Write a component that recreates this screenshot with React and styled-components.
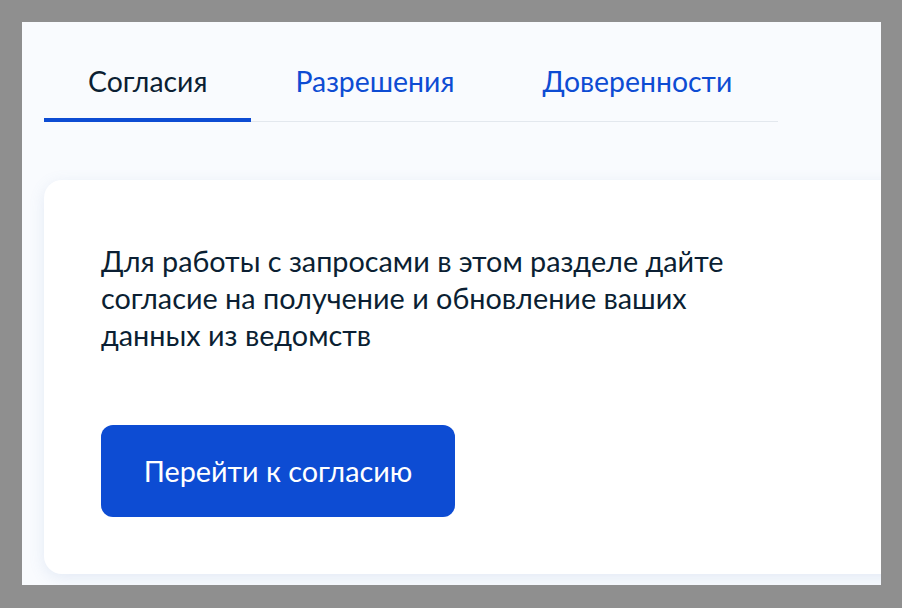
import React from "react";
import styled, { createGlobalStyle } from "styled-components";

const GlobalStyle = createGlobalStyle`
  html, body {
    margin: 0;
    padding: 0;
    background: #8f8f8f;
  }
  * {
    box-sizing: border-box;
  }
`;

const Frame = styled.div`
  width: 902px;
  height: 608px;
  padding: 22px 21px 23px 22px;
  background: #8f8f8f;
`;

const Page = styled.div`
  height: 100%;
  background: #f9fbfe;
  overflow: hidden;
  font-family: Lato, "Noto Sans", sans-serif;
  color: #0b1f33;
`;

const Tabs = styled.div`
  display: flex;
  width: 734px;
  margin: 0 0 0 22px;
  padding-top: 40px;
  border-bottom: 1px solid #e3e8ee;
`;

const Tab = styled.div`
  padding: 0 44px 18px;
  font-size: 28.4px;
  line-height: 38px;
  color: ${(p) => (p.active ? "#0b1f33" : "#0d4cd3")};
  border-bottom: 4px solid ${(p) => (p.active ? "#0d4cd3" : "transparent")};
  margin-bottom: -1px;
  white-space: nowrap;
`;

const Card = styled.div`
  margin: 58px -40px 0 22px;
  padding: 63px 57px 57px 57px;
  background: #ffffff;
  border-radius: 18px;
  box-shadow: 0 4px 16px rgba(102, 132, 190, 0.14);
`;

const Text = styled.p`
  margin: 0;
  max-width: 640px;
  font-size: 28.8px;
  line-height: 37px;
`;

const Button = styled.button`
  display: block;
  margin-top: 71px;
  width: 354px;
  height: 92px;
  border: none;
  border-radius: 12px;
  background: #0d4cd3;
  color: #ffffff;
  font-family: Lato, "Noto Sans", sans-serif;
  font-size: 28.8px;
  cursor: pointer;
`;

export default function App() {
  return (
    <>
      <GlobalStyle />
      <Frame>
        <Page>
          <Tabs>
            <Tab active>Согласия</Tab>
            <Tab>Разрешения</Tab>
            <Tab>Доверенности</Tab>
          </Tabs>
          <Card>
            <Text>
              Для работы с запросами в этом разделе дайте согласие на получение
              и обновление ваших данных из ведомств
            </Text>
            <Button>Перейти к согласию</Button>
          </Card>
        </Page>
      </Frame>
    </>
  );
}
